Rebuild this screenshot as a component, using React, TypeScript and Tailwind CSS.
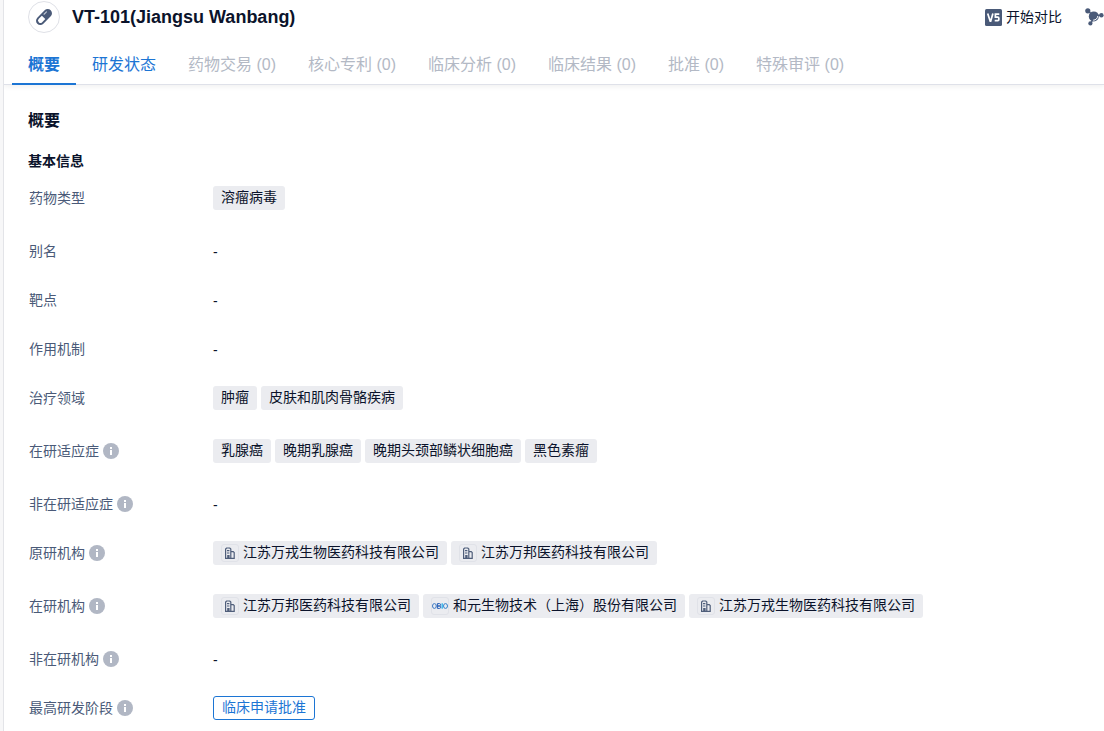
import React from "react";

type Tag = { text: string; icon?: "building" | "obio" };
type Row = { label: string; info?: boolean; tags?: Tag[]; stage?: string };

const tabs = [
  { text: "概要", style: "font-bold text-[#1c75d4]" },
  { text: "研发状态", style: "text-[#1c75d4]" },
  { text: "药物交易 (0)", style: "text-[#b3b9c5]" },
  { text: "核心专利 (0)", style: "text-[#b3b9c5]" },
  { text: "临床分析 (0)", style: "text-[#b3b9c5]" },
  { text: "临床结果 (0)", style: "text-[#b3b9c5]" },
  { text: "批准 (0)", style: "text-[#b3b9c5]" },
  { text: "特殊审评 (0)", style: "text-[#b3b9c5]" },
];

const rows: Row[] = [
  { label: "药物类型", tags: [{ text: "溶瘤病毒" }] },
  { label: "别名" },
  { label: "靶点" },
  { label: "作用机制" },
  { label: "治疗领域", tags: [{ text: "肿瘤" }, { text: "皮肤和肌肉骨骼疾病" }] },
  {
    label: "在研适应症",
    info: true,
    tags: [{ text: "乳腺癌" }, { text: "晚期乳腺癌" }, { text: "晚期头颈部鳞状细胞癌" }, { text: "黑色素瘤" }],
  },
  { label: "非在研适应症", info: true },
  {
    label: "原研机构",
    info: true,
    tags: [
      { text: "江苏万戎生物医药科技有限公司", icon: "building" },
      { text: "江苏万邦医药科技有限公司", icon: "building" },
    ],
  },
  {
    label: "在研机构",
    info: true,
    tags: [
      { text: "江苏万邦医药科技有限公司", icon: "building" },
      { text: "和元生物技术（上海）股份有限公司", icon: "obio" },
      { text: "江苏万戎生物医药科技有限公司", icon: "building" },
    ],
  },
  { label: "非在研机构", info: true },
  { label: "最高研发阶段", info: true, stage: "临床申请批准" },
];

function PillIcon() {
  return (
    <svg width="18" height="18" viewBox="0 0 18 18">
      <g transform="rotate(-45 9 9)">
        <rect x="-0.5" y="4.7" width="19" height="8.6" rx="4.3" fill="#4a5a78" />
        <path d="M8.4 6.6H4a2.4 2.4 0 0 0 0 4.8h4.4z" fill="#fff" />
        <path d="M11 7.1h3.4" stroke="#c3cad6" strokeWidth="1.1" strokeLinecap="round" />
      </g>
    </svg>
  );
}

function MoleculeIcon() {
  return (
    <svg className="shrink-0" width="20" height="18" viewBox="0 0 20 18" fill="#4a5a78">
      <path d="M3 3l6 5 8-1M9 8l-3 7.5" stroke="#4a5a78" strokeWidth="1.5" fill="none" />
      <circle cx="2.8" cy="2.8" r="2.6" />
      <circle cx="16.4" cy="7.2" r="2.2" />
      <circle cx="5.4" cy="15.4" r="2.1" />
      <circle cx="8.8" cy="8.4" r="5" />
      <path d="M8.2 12.2c2.7-.1 4.3-1.7 4.5-4.1" stroke="#fff" strokeWidth="1" fill="none" />
    </svg>
  );
}

function VersusIcon() {
  return (
    <svg width="17" height="17" viewBox="0 0 17 17">
      <rect width="17" height="17" rx="1.5" fill="#4a5a78" />
      <path
        d="M2.7 4.4l2.5 7.8h.5l2.2-7.8M14.3 5.1h-3.9v3h2.4c.7 0 1 .3 1 .9v1.7c0 .6-.3.9-1 .9H9.7"
        fill="none"
        stroke="#fff"
        strokeWidth="1.7"
      />
    </svg>
  );
}

function InfoIcon() {
  return (
    <svg width="16" height="16" viewBox="0 0 16 16">
      <circle cx="8" cy="8" r="8" fill="#b1b7c4" />
      <path d="M7 4h2v2H7zM7 7h2v5H7z" fill="#fff" />
    </svg>
  );
}

function BuildingIcon() {
  return (
    <svg className="shrink-0" width="16" height="16" viewBox="0 0 16 16" fill="none" stroke="#4f5e7a" strokeWidth="1.2">
      <path d="M3.6 13.4V4l1-1h3.2l1 1v9.4M8.8 6.6h2.4l1 1v5.8M3 13.4h9.8M5 5.6h2.4M5 8h2.4M5.8 13v-2.4h1.2V13" />
    </svg>
  );
}

function ObioIcon() {
  return (
    <svg className="shrink-0" width="16" height="16" viewBox="0 0 16 16" fill="none" strokeWidth="1">
      <ellipse cx="2.4" cy="8" rx="1.9" ry="2.4" stroke="#3c79c4" />
      <path d="M5.4 5.6h2.2c1.3 0 1.3 2.2 0 2.4H5.5h2.2c1.4 0 1.4 2.4 0 2.4H5.4z" stroke="#2860b8" />
      <path d="M10.2 5.3v5.4" stroke="#2ab5ee" strokeWidth="1.3" />
      <ellipse cx="13.5" cy="8" rx="2" ry="2.4" stroke="#3583cc" />
    </svg>
  );
}

function TagChip({ tag }: { tag: Tag }) {
  return (
    <span className="flex h-6 items-center gap-1 rounded-[3px] bg-[#ebecf0] px-2 text-[#0b132b]">
      {tag.icon && (
        <span className="flex size-[18px] items-center justify-center rounded-[3px] border border-[#e0e2e8]">
          {tag.icon === "building" ? <BuildingIcon /> : <ObioIcon />}
        </span>
      )}
      <span className="-mt-0.5 leading-[22px]">{tag.text}</span>
    </span>
  );
}

function InfoRow({ row }: { row: Row }) {
  return (
    <div className={row.tags ? "flex h-[53px] items-start" : "flex h-[49px] items-start"}>
      <div className="flex h-6 w-[184px] shrink-0 items-center gap-1 pl-px text-[#4a5a78]">
        <span>{row.label}</span>
        {row.info && <InfoIcon />}
      </div>
      <div className="flex h-6 items-center gap-1 pl-px">
        {row.tags?.map((tag, i) => <TagChip key={i} tag={tag} />)}
        {row.stage && (
          <span className="flex h-6 items-center rounded-[3px] border border-[#1c75d4] px-2 text-[#1c75d4]">
            <span className="-mt-0.5 leading-5">{row.stage}</span>
          </span>
        )}
        {!row.tags && !row.stage && <span className="pt-0.5 text-[#0b132b]">-</span>}
      </div>
    </div>
  );
}

export default function App() {
  return (
    <div className="flex h-[731px] w-full overflow-hidden bg-[#f7f7f8] pl-[3px] font-['Liberation_Sans','Noto_Sans_CJK_SC',sans-serif] text-sm text-[#0b132b]">
      <main className="flex min-w-0 flex-1 flex-col overflow-hidden border-l border-[#e3e4e8] bg-white whitespace-nowrap">
        <header className="z-10 flex h-[85px] shrink-0 flex-col border-b border-[#dfe1e9] shadow-[0_2px_5px_rgba(0,0,0,0.06)]">
          <div className="flex h-[34px] shrink-0 items-center pl-6">
            <span className="flex size-8 items-center justify-center rounded-full border border-[#dfe1e7]">
              <PillIcon />
            </span>
            <h1 className="ml-3 text-lg leading-8 font-bold">VT-101(Jiangsu Wanbang)</h1>
            <div className="ml-auto flex items-center gap-1">
              <VersusIcon />
              <span className="leading-5">开始对比</span>
            </div>
            <div className="ml-[23px] flex w-[19px] shrink-0 overflow-hidden">
              <MoleculeIcon />
            </div>
          </div>
          <nav className="flex h-[51px] shrink-0 pl-2 text-base">
            {tabs.map((tab, i) => (
              <div
                key={tab.text}
                className={
                  i === 0
                    ? "flex h-[51px] shrink-0 items-center border-b-2 border-[#1c75d4] px-4 pt-3"
                    : "flex h-[51px] shrink-0 items-center border-b-2 border-transparent px-4 pt-3"
                }
              >
                <span className={tab.style}>{tab.text}</span>
              </div>
            ))}
          </nav>
        </header>
        <section className="flex flex-col pl-6">
          <h2 className="mt-6 text-base leading-6 font-bold">概要</h2>
          <h3 className="mt-[17px] text-sm leading-[22px] font-bold">基本信息</h3>
          <div className="mt-[14px] flex flex-col">
            {rows.map((row) => (
              <InfoRow key={row.label} row={row} />
            ))}
          </div>
        </section>
      </main>
    </div>
  );
}
